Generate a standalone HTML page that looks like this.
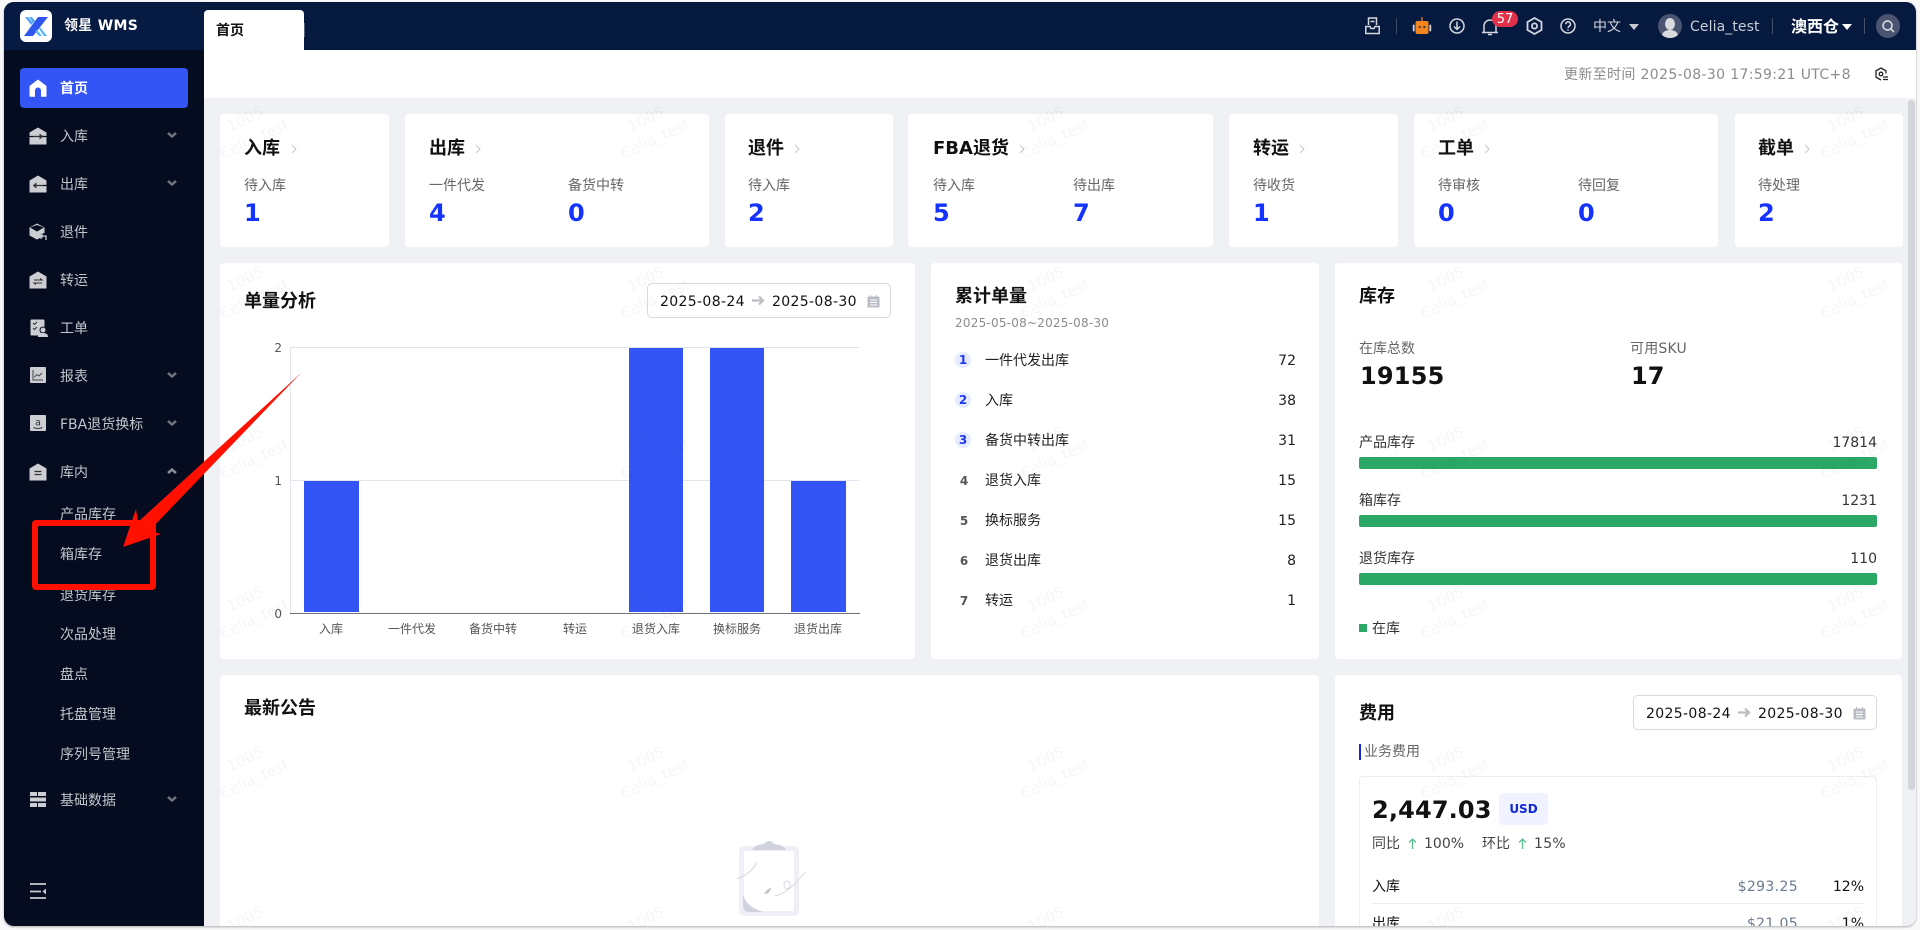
<!DOCTYPE html>
<html lang="zh"><head><meta charset="utf-8"><title>领星 WMS</title>
<style>
*{box-sizing:border-box}
html,body{margin:0;padding:0;width:1920px;height:930px;overflow:hidden;background:#f8f8f8;font-family:"DejaVu Sans","Noto Sans CJK SC",sans-serif;font-size:14px;color:#222}
#f{position:absolute;left:4px;top:2px;width:1912px;height:924px;overflow:hidden;border-radius:10px;background:#f0f1f5;box-shadow:0 1px 2px rgba(0,0,0,.3)}
#i{position:absolute;left:-4px;top:-2px;width:1920px;height:930px}
.a,.t,.c,.s{position:absolute}
.t{white-space:nowrap;line-height:20px;height:20px;margin-top:1px}
.r{text-align:right}
.c{background:#fff;border-radius:4px}
.s{display:block;overflow:visible}
.m{color:#c3c5cb;left:60px}
.h{font-size:18px;font-weight:700;color:#111;line-height:24px;height:24px}
.l{color:#666}
.n{font-size:24px;font-weight:700;color:#1533ff;line-height:30px;height:30px}
.b{font-weight:700;font-size:12px;color:#555;width:16px;text-align:center;left:955px}
.x{font-size:12px;color:#555;text-align:center;width:80px}
.d{letter-spacing:.35px}
.pick{position:absolute;border:1px solid #d9d9de;border-radius:5px;background:transparent}
</style></head><body>
<div id="f"><div id="i">

<!-- header -->
<div class="a" style="left:0;top:0;width:1920px;height:50px;background:#06193e"></div>
<div class="a" style="left:0;top:0;width:204px;height:50px;background:#071b42"></div>
<div class="a" style="left:20px;top:10px;width:32px;height:32px;background:#fff;border-radius:6px"></div>
<svg class="s" style="left:20px;top:10px" width="32" height="32" viewBox="0 0 32 32">
<path d="M18 7h10L13 26H4z" fill="#2f55ee"/>
<path d="M5 7h3l5 6-2 2zM9 7h3l3 4-2 2z" fill="#56a8f5"/>
<path d="M20 17l7 9h-3l-5-7zM17 20l5 6h-3l-4-5z" fill="#56b4f5"/>
</svg>
<div class="t" style="left:64px;top:15px;color:#fff;font-weight:700;font-size:14px;letter-spacing:.3px">领星 WMS</div>
<div class="a" style="left:204px;top:10px;width:100px;height:40px;background:#fff;border-radius:4px 4px 0 0"></div>
<div class="a" style="left:304px;top:23px;width:1px;height:14px;background:#55607a"></div>
<div class="t" style="left:216px;top:20px;color:#111;font-weight:700">首页</div>

<svg class="s" style="left:1365px;top:17px" width="15" height="18" viewBox="0 0 15 18" fill="none" stroke="#d4d7de" stroke-width="1.5"><path d="M3.500 8V1h8v7M5.500 4.500h4M.8 9.500h4.200l1 2h3l1-2h4.200v7H.8z"/></svg>
<div class="a" style="left:1396px;top:18px;width:1px;height:16px;background:#3c4a66"></div>
<svg class="s" style="left:1412px;top:16px" width="20" height="20" viewBox="0 0 20 20"><rect x="3.500" y="5" width="13" height="13" rx="2" fill="#f5851f"/><rect x="9.400" y="1" width="1.200" height="4" fill="#f5851f"/><rect x="0.800" y="8.500" width="1.800" height="7" rx=".9" fill="#d8d8d8"/><rect x="17.400" y="8.500" width="1.800" height="7" rx=".9" fill="#d8d8d8"/><circle cx="7.700" cy="11" r="1.100" fill="#333"/><circle cx="12.300" cy="11" r="1.100" fill="#333"/></svg>
<svg class="s" style="left:1449px;top:18px" width="16" height="16" viewBox="0 0 16 16" fill="none" stroke="#d4d7de" stroke-width="1.500"><circle cx="8" cy="8" r="7"/><path d="M8 3.500v8M5 8.500l3 3 3-3"/></svg>
<svg class="s" style="left:1481px;top:18px" width="18" height="18" viewBox="0 0 18 18" fill="none" stroke="#d4d7de" stroke-width="1.500"><path d="M1 14.500h16M3 14.500V8a6 6 0 0 1 12 0v6.500M7 16.500h4"/></svg>
<div class="a" style="left:1492px;top:11px;width:26px;height:16px;background:#e2304a;border-radius:8px;color:#fff;font-size:13px;line-height:17px;text-align:center">57</div>
<svg class="s" style="left:1526px;top:17px" width="17" height="18" viewBox="0 0 17 18" fill="none" stroke="#d4d7de" stroke-width="1.800"><path d="M8.500 1l7 4v8l-7 4-7-4V5z"/><circle cx="8.500" cy="9" r="2.600"/></svg>
<svg class="s" style="left:1560px;top:18px" width="16" height="16" viewBox="0 0 16 16" fill="none" stroke="#d4d7de" stroke-width="1.500"><circle cx="8" cy="8" r="7"/><path d="M5.800 6.200a2.300 2.300 0 1 1 3.400 2c-.8.500-1.200.9-1.200 1.800M8 11.300v1.300"/></svg>
<div class="t" style="left:1593px;top:16px;color:#d4d7de;font-size:14px">中文</div>
<div class="a" style="left:1629px;top:24px;border:5px solid transparent;border-top:6px solid #c6cad2;border-bottom:0"></div>
<svg class="s" style="left:1658px;top:14px" width="24" height="24" viewBox="0 0 24 24"><circle cx="12" cy="12" r="12" fill="#4a5470"/><ellipse cx="12" cy="10" rx="5" ry="6" fill="#d8dade"/><path d="M4 21c1-4 5-5 8-5s7 1 8 5a12 12 0 0 1-16 0z" fill="#d8dade"/></svg>
<div class="t" style="left:1690px;top:16px;color:#c9ced7;font-size:14px;letter-spacing:.1px">Celia_test</div>
<div class="a" style="left:1772px;top:18px;width:1px;height:16px;background:#47536c"></div>
<div class="t" style="left:1791px;top:16px;color:#fff;font-size:16px;font-weight:700">澳西仓</div>
<div class="a" style="left:1842px;top:24px;border:5px solid transparent;border-top:6px solid #fff;border-bottom:0"></div>
<div class="a" style="left:1864px;top:18px;width:1px;height:16px;background:#47536c"></div>
<svg class="s" style="left:1876px;top:14px" width="24" height="24" viewBox="0 0 24 24"><circle cx="12" cy="12" r="12" fill="#4a5470"/><circle cx="11.500" cy="11.500" r="4.500" fill="none" stroke="#cfd3db" stroke-width="1.700"/><path d="M15 15l3 3" stroke="#cfd3db" stroke-width="1.700"/></svg>

<!-- sidebar -->
<div class="a" style="left:0;top:50px;width:204px;height:880px;background:#050c1f"></div>
<div class="a" style="left:20px;top:68px;width:168px;height:40px;background:#3355f5;border-radius:4px"></div>
<svg class="s" style="left:29px;top:79px" width="18" height="18" viewBox="0 0 18 18"><path d="M9 0.500l8.500 6.500v10a.8.800 0 0 1-.8.800H12V11.500a3 3 0 0 0-6 0v6.300H1.300a.8.800 0 0 1-.8-.8V7z" fill="#fff"/></svg>
<div class="t" style="left:60px;top:78px;color:#fff;font-weight:700">首页</div>

<svg class="s" style="left:29px;top:127px" width="18" height="18" viewBox="0 0 18 18"><path d="M9 0.500l8.500 5V17.500H.5V5.500z" fill="#ccced4"/><path d="M0 9.500h18" stroke="#050c1f" stroke-width="1.200"/><path d="M4 9.500h9M11 7.500l2.500 2-2.500 2z" stroke="#333" fill="#333"/></svg>
<div class="t m" style="top:126px">入库</div>
<svg class="s" style="left:29px;top:175px" width="18" height="18" viewBox="0 0 18 18"><path d="M9 0.500l8.500 5V17.500H.5V5.500z" fill="#ccced4"/><path d="M6 10.500h12" stroke="#050c1f" stroke-width="1.200"/><path d="M5 10.500h9M7 8.500l-2.500 2 2.500 2z" stroke="#333" fill="#333"/></svg>
<div class="t m" style="top:174px">出库</div>
<svg class="s" style="left:29px;top:223px" width="19" height="18" viewBox="0 0 19 18"><path d="M8 0.500l7.500 4v5.500l-3 1-1.500 4-3 1.500-7.500-4V4.500z" fill="#ccced4"/><path d="M1 4.500l7 4 7-4-7-2.500z" fill="#050c1f"/><path d="M12 16v-3h5v4M12 13l1.500-1.500M12 13l1.500 1.500" stroke="#ccced4" stroke-width="1.300" fill="none"/></svg>
<div class="t m" style="top:222px">退件</div>
<svg class="s" style="left:29px;top:271px" width="18" height="18" viewBox="0 0 18 18"><path d="M9 0.500l8.500 5V17.500H.5V5.500z" fill="#ccced4"/><path d="M5 9h8l-2-1.500M13 12H5l2 1.500" stroke="#333" stroke-width="1.100" fill="none"/></svg>
<div class="t m" style="top:270px">转运</div>
<svg class="s" style="left:30px;top:319px" width="18" height="18" viewBox="0 0 18 18"><rect x="0.500" y="0.500" width="14" height="16" rx="1" fill="#ccced4"/><path d="M3 4l1.500 1.500L7 3M3 9l1.500 1.500L7 8" stroke="#333" fill="none"/><circle cx="13" cy="11" r="3" fill="#ccced4" stroke="#050c1f"/><path d="M8 18c0-3 2-4 5-4s5 1 5 4z" fill="#ccced4"/></svg>
<div class="t m" style="top:318px">工单</div>
<svg class="s" style="left:30px;top:367px" width="16" height="16" viewBox="0 0 16 16"><rect width="16" height="16" rx="1" fill="#ccced4"/><path d="M3 3v10h10M4.500 10l2.500-2.500 2 1.500 3-3" stroke="#444" fill="none"/></svg>
<div class="t m" style="top:366px">报表</div>
<svg class="s" style="left:30px;top:415px" width="16" height="16" viewBox="0 0 16 16"><rect width="16" height="16" rx="1" fill="#ccced4"/><text x="8" y="10.500" font-size="9.500" text-anchor="middle" fill="#333" font-family="DejaVu Sans">a</text><path d="M3.500 12.500q4.500 2 9 0" stroke="#333" fill="none"/></svg>
<div class="t m" style="top:414px">FBA退货换标</div>
<svg class="s" style="left:29px;top:463px" width="18" height="18" viewBox="0 0 18 18"><path d="M9 0.500l8.500 5V17.500H.5V5.500z" fill="#ccced4"/><path d="M5.500 8.500h7M5.500 11.500h7" stroke="#333" stroke-width="1.200"/></svg>
<div class="t m" style="top:462px">库内</div>

<div class="t m" style="top:504px">产品库存</div>
<div class="t m" style="top:544px">箱库存</div>
<div class="t m" style="top:585px">退货库存</div>
<div class="t m" style="top:624px">次品处理</div>
<div class="t m" style="top:664px">盘点</div>
<div class="t m" style="top:704px">托盘管理</div>
<div class="t m" style="top:744px">序列号管理</div>
<svg class="s" style="left:30px;top:792px" width="16" height="15" viewBox="0 0 16 15" fill="#ccced4"><rect width="7" height="4"/><rect x="8" width="8" height="4"/><rect y="5.500" width="16" height="4"/><rect y="11" width="7" height="4"/><rect x="8" y="11" width="8" height="4"/></svg>
<div class="t m" style="top:790px">基础数据</div>

<svg class="s" style="left:167px;top:132px" width="10" height="6" viewBox="0 0 10 6" fill="none" stroke="#6e7179" stroke-width="2.500"><path d="M1 1l4 3.500L9 1"/></svg>
<svg class="s" style="left:167px;top:180px" width="10" height="6" viewBox="0 0 10 6" fill="none" stroke="#6e7179" stroke-width="2.500"><path d="M1 1l4 3.500L9 1"/></svg>
<svg class="s" style="left:167px;top:372px" width="10" height="6" viewBox="0 0 10 6" fill="none" stroke="#6e7179" stroke-width="2.500"><path d="M1 1l4 3.500L9 1"/></svg>
<svg class="s" style="left:167px;top:420px" width="10" height="6" viewBox="0 0 10 6" fill="none" stroke="#6e7179" stroke-width="2.500"><path d="M1 1l4 3.500L9 1"/></svg>
<svg class="s" style="left:167px;top:468px" width="10" height="6" viewBox="0 0 10 6" fill="none" stroke="#8a8d94" stroke-width="2.500"><path d="M1 5l4-3.500L9 5"/></svg>
<svg class="s" style="left:167px;top:796px" width="10" height="6" viewBox="0 0 10 6" fill="none" stroke="#6e7179" stroke-width="2.500"><path d="M1 1l4 3.500L9 1"/></svg>
<svg class="s" style="left:30px;top:883px" width="16" height="16" viewBox="0 0 16 16" fill="none" stroke="#c8cad0" stroke-width="1.800"><path d="M0 1h16M0 8.500h11M0 15h16"/><path d="M16 5.500v6l-3.500-3z" fill="#c8cad0" stroke="none"/></svg>

<!-- content -->
<div class="a" style="left:204px;top:50px;width:1716px;height:48px;background:#fff"></div>
<div class="t d" style="left:1564px;top:64px;color:#8c8c8c;font-size:14px">更新至时间 2025-08-30 17:59:21 UTC+8</div>
<svg class="s" style="left:1875px;top:67px" width="13" height="14" viewBox="0 0 13 14" fill="none" stroke="#222" stroke-width="1.300"><path d="M6 1l5 2.800v2.700M6 13L1 10.200V3.800L6 1"/><circle cx="6" cy="7" r="1.800"/><path d="M8 10h5M8 12.500h5"/></svg>

<div class="a" style="left:1908px;top:98px;width:8px;height:832px;background:#f0f1f5"></div>
<div class="a" style="left:1908px;top:100px;width:7px;height:690px;background:#d4d5da;border-radius:3px"></div>

<!-- row 1 -->
<div class="c" style="left:220px;top:114px;width:169px;height:133px"></div>
<div class="c" style="left:405px;top:114px;width:304px;height:133px"></div>
<div class="c" style="left:725px;top:114px;width:168px;height:133px"></div>
<div class="c" style="left:908px;top:114px;width:305px;height:133px"></div>
<div class="c" style="left:1229px;top:114px;width:169px;height:133px"></div>
<div class="c" style="left:1414px;top:114px;width:304px;height:133px"></div>
<div class="c" style="left:1735px;top:114px;width:168px;height:133px"></div>

<div class="t h" style="left:244px;top:136px">入库</div>
<div class="t h" style="left:429px;top:136px">出库</div>
<div class="t h" style="left:748px;top:136px">退件</div>
<div class="t h" style="left:933px;top:136px">FBA退货</div>
<div class="t h" style="left:1253px;top:136px">转运</div>
<div class="t h" style="left:1438px;top:136px">工单</div>
<div class="t h" style="left:1758px;top:136px">截单</div>
<svg class="s" style="left:291px;top:144px" width="6" height="10" viewBox="0 0 6 10" fill="none" stroke="#c4c7ce"><path d="M1 1l4 4-4 4"/></svg>
<svg class="s" style="left:475px;top:144px" width="6" height="10" viewBox="0 0 6 10" fill="none" stroke="#c4c7ce"><path d="M1 1l4 4-4 4"/></svg>
<svg class="s" style="left:794px;top:144px" width="6" height="10" viewBox="0 0 6 10" fill="none" stroke="#c4c7ce"><path d="M1 1l4 4-4 4"/></svg>
<svg class="s" style="left:1019px;top:144px" width="6" height="10" viewBox="0 0 6 10" fill="none" stroke="#c4c7ce"><path d="M1 1l4 4-4 4"/></svg>
<svg class="s" style="left:1299px;top:144px" width="6" height="10" viewBox="0 0 6 10" fill="none" stroke="#c4c7ce"><path d="M1 1l4 4-4 4"/></svg>
<svg class="s" style="left:1484px;top:144px" width="6" height="10" viewBox="0 0 6 10" fill="none" stroke="#c4c7ce"><path d="M1 1l4 4-4 4"/></svg>
<svg class="s" style="left:1804px;top:144px" width="6" height="10" viewBox="0 0 6 10" fill="none" stroke="#c4c7ce"><path d="M1 1l4 4-4 4"/></svg>

<div class="t l" style="left:244px;top:175px;font-size:14px">待入库</div>
<div class="t l" style="left:429px;top:175px">一件代发</div>
<div class="t l" style="left:568px;top:175px">备货中转</div>
<div class="t l" style="left:748px;top:175px">待入库</div>
<div class="t l" style="left:933px;top:175px">待入库</div>
<div class="t l" style="left:1073px;top:175px">待出库</div>
<div class="t l" style="left:1253px;top:175px">待收货</div>
<div class="t l" style="left:1438px;top:175px">待审核</div>
<div class="t l" style="left:1578px;top:175px">待回复</div>
<div class="t l" style="left:1758px;top:175px">待处理</div>

<div class="t n" style="left:244px;top:197px">1</div>
<div class="t n" style="left:429px;top:197px">4</div>
<div class="t n" style="left:568px;top:197px">0</div>
<div class="t n" style="left:748px;top:197px">2</div>
<div class="t n" style="left:933px;top:197px">5</div>
<div class="t n" style="left:1073px;top:197px">7</div>
<div class="t n" style="left:1253px;top:197px">1</div>
<div class="t n" style="left:1438px;top:197px">0</div>
<div class="t n" style="left:1578px;top:197px">0</div>
<div class="t n" style="left:1758px;top:197px">2</div>

<!-- row 2 cards -->
<div class="c" style="left:220px;top:263px;width:695px;height:396px"></div>
<div class="c" style="left:931px;top:263px;width:388px;height:396px"></div>
<div class="c" style="left:1335px;top:263px;width:567px;height:396px"></div>

<!-- chart -->
<div class="t h" style="left:244px;top:289px">单量分析</div>
<div class="pick" style="left:647px;top:283px;width:244px;height:35px"></div>
<div class="t d" style="left:660px;top:291px;color:#111">2025-08-24</div>
<svg class="s" style="left:751px;top:295px" width="14" height="11" viewBox="0 0 14 11" fill="none" stroke="#bcbec4" stroke-width="2.200"><path d="M1 5.500h11M8 1.500l4 4-4 4"/></svg>
<div class="t d" style="left:772px;top:291px;color:#111">2025-08-30</div>
<svg class="s" style="left:867px;top:295px" width="13" height="13" viewBox="0 0 13 13"><rect x=".5" y="1.500" width="12" height="11" rx="1" fill="#b9bcc3"/><path d="M3 5h7M3 7.500h7M3 10h7" stroke="#fff"/><path d="M3.500 0v3M9.500 0v3" stroke="#b9bcc3"/></svg>

<div class="a" style="left:290px;top:347px;width:569px;height:1px;background:#e2e5ef"></div>
<div class="a" style="left:290px;top:480px;width:569px;height:1px;background:#e2e5ef"></div>
<div class="a" style="left:290px;top:347px;width:1px;height:266px;background:#e2e5ef"></div>
<div class="a" style="left:290px;top:613px;width:570px;height:1px;background:#6e6e74"></div>
<div class="a" style="left:304px;top:481px;width:55px;height:131px;background:#3355f5"></div>
<div class="a" style="left:629px;top:348px;width:54px;height:264px;background:#3355f5"></div>
<div class="a" style="left:710px;top:348px;width:54px;height:264px;background:#3355f5"></div>
<div class="a" style="left:791px;top:481px;width:55px;height:131px;background:#3355f5"></div>
<div class="t r" style="left:262px;top:337px;width:20px;font-size:12px;color:#555">2</div>
<div class="t r" style="left:262px;top:470px;width:20px;font-size:12px;color:#555">1</div>
<div class="t r" style="left:262px;top:603px;width:20px;font-size:12px;color:#555">0</div>
<div class="t x" style="left:291px;top:618px">入库</div>
<div class="t x" style="left:372px;top:618px">一件代发</div>
<div class="t x" style="left:453px;top:618px">备货中转</div>
<div class="t x" style="left:535px;top:618px">转运</div>
<div class="t x" style="left:616px;top:618px">退货入库</div>
<div class="t x" style="left:697px;top:618px">换标服务</div>
<div class="t x" style="left:778px;top:618px">退货出库</div>

<!-- ranks -->
<div class="t h" style="left:955px;top:284px">累计单量</div>
<div class="t" style="left:955px;top:312px;font-size:12px;color:#8c8c8c;letter-spacing:.22px">2025-05-08~2025-08-30</div>
<div class="a" style="left:955px;top:352px;width:16px;height:16px;border-radius:8px;background:#e6ebff"></div>
<div class="a" style="left:955px;top:392px;width:16px;height:16px;border-radius:8px;background:#e6ebff"></div>
<div class="a" style="left:955px;top:432px;width:16px;height:16px;border-radius:8px;background:#e6ebff"></div>
<div class="t b" style="top:349px;color:#2038ee">1</div>
<div class="t b" style="top:389px;color:#2038ee">2</div>
<div class="t b" style="top:429px;color:#2038ee">3</div>
<div class="t b" style="top:470px;left:956px">4</div>
<div class="t b" style="top:510px;left:956px">5</div>
<div class="t b" style="top:550px;left:956px">6</div>
<div class="t b" style="top:590px;left:956px">7</div>
<div class="t" style="left:985px;top:350px">一件代发出库</div>
<div class="t" style="left:985px;top:390px">入库</div>
<div class="t" style="left:985px;top:430px">备货中转出库</div>
<div class="t" style="left:985px;top:470px">退货入库</div>
<div class="t" style="left:985px;top:510px">换标服务</div>
<div class="t" style="left:985px;top:550px">退货出库</div>
<div class="t" style="left:985px;top:590px">转运</div>
<div class="t r" style="left:1236px;top:350px;width:60px">72</div>
<div class="t r" style="left:1236px;top:390px;width:60px">38</div>
<div class="t r" style="left:1236px;top:430px;width:60px">31</div>
<div class="t r" style="left:1236px;top:470px;width:60px">15</div>
<div class="t r" style="left:1236px;top:510px;width:60px">15</div>
<div class="t r" style="left:1236px;top:550px;width:60px">8</div>
<div class="t r" style="left:1236px;top:590px;width:60px">1</div>

<!-- stock -->
<div class="t h" style="left:1359px;top:284px">库存</div>
<div class="t l" style="left:1359px;top:338px">在库总数</div>
<div class="t l" style="left:1630px;top:338px;letter-spacing:.2px">可用SKU</div>
<div class="t n" style="left:1360px;top:360px;color:#111;letter-spacing:.2px">19155</div>
<div class="t n" style="left:1631px;top:360px;color:#111">17</div>
<div class="t" style="left:1359px;top:432px;color:#333">产品库存</div>
<div class="t r" style="left:1777px;top:432px;width:100px;color:#333">17814</div>
<div class="a" style="left:1359px;top:457px;width:518px;height:12px;background:#2aa866;border-radius:2px"></div>
<div class="t" style="left:1359px;top:490px;color:#333">箱库存</div>
<div class="t r" style="left:1777px;top:490px;width:100px;color:#333">1231</div>
<div class="a" style="left:1359px;top:515px;width:518px;height:12px;background:#2aa866;border-radius:2px"></div>
<div class="t" style="left:1359px;top:548px;color:#333">退货库存</div>
<div class="t r" style="left:1777px;top:548px;width:100px;color:#333">110</div>
<div class="a" style="left:1359px;top:573px;width:518px;height:12px;background:#2aa866;border-radius:2px"></div>
<div class="a" style="left:1359px;top:624px;width:8px;height:8px;background:#2aa866"></div>
<div class="t" style="left:1372px;top:618px;color:#333">在库</div>

<!-- row 3 -->
<div class="c" style="left:220px;top:675px;width:1099px;height:270px"></div>
<div class="c" style="left:1335px;top:675px;width:567px;height:270px"></div>
<div class="t h" style="left:244px;top:696px">最新公告</div>
<svg class="s" style="left:730px;top:838px" width="80" height="84" viewBox="0 0 80 84" fill="none">
<rect x="11.500" y="10.500" width="55" height="65" rx="2" fill="#fff" stroke="#eef0f5" stroke-width="5"/>
<path d="M22 12q2-5 12-6 2-3 5-3t5 3q10 1 12 6z" fill="#d0d3de"/>
<path d="M13 56q2 12 20 18H18q-5-1-5-6z" fill="#d0d3de"/>
<path d="M7 41q14-5 20-17M45 58q14-3 30-24" stroke="#d6d8e0"/>
<ellipse cx="57" cy="47" rx="3" ry="4" stroke="#d6d8e0"/>
<path d="M34 56q4-6 7-6-1 6-7 6z" fill="#c0c3cf"/>
</svg>

<div class="t h" style="left:1359px;top:701px">费用</div>
<div class="pick" style="left:1633px;top:695px;width:244px;height:35px"></div>
<div class="t d" style="left:1646px;top:703px;color:#111">2025-08-24</div>
<svg class="s" style="left:1737px;top:707px" width="14" height="11" viewBox="0 0 14 11" fill="none" stroke="#bcbec4" stroke-width="2.200"><path d="M1 5.500h11M8 1.500l4 4-4 4"/></svg>
<div class="t d" style="left:1758px;top:703px;color:#111">2025-08-30</div>
<svg class="s" style="left:1853px;top:707px" width="13" height="13" viewBox="0 0 13 13"><rect x=".5" y="1.500" width="12" height="11" rx="1" fill="#b9bcc3"/><path d="M3 5h7M3 7.500h7M3 10h7" stroke="#fff"/><path d="M3.500 0v3M9.500 0v3" stroke="#b9bcc3"/></svg>
<div class="a" style="left:1359px;top:744px;width:2px;height:16px;background:#1028d8"></div>
<div class="t l" style="left:1364px;top:741px">业务费用</div>
<div class="a" style="left:1359px;top:776px;width:518px;height:200px;border:1px solid #eceef2;border-radius:4px"></div>
<div class="t" style="left:1372px;top:794px;font-size:24px;font-weight:700;color:#111;line-height:30px;height:30px;letter-spacing:.15px">2,447.03</div>
<div class="a" style="left:1499px;top:793px;width:49px;height:32px;background:#f0f3ff;border-radius:4px;color:#1028d8;font-size:12px;font-weight:700;line-height:32px;text-align:center">USD</div>
<div class="t" style="left:1372px;top:833px;color:#444">同比</div>
<svg class="s" style="left:1408px;top:838px" width="9" height="11" viewBox="0 0 9 11" fill="none" stroke="#5bbf92" stroke-width="1.300"><path d="M4.500 11V1M1 4.500L4.500 1 8 4.500"/></svg>
<div class="t" style="left:1424px;top:833px;color:#444">100%</div>
<div class="t" style="left:1482px;top:833px;color:#444">环比</div>
<svg class="s" style="left:1518px;top:838px" width="9" height="11" viewBox="0 0 9 11" fill="none" stroke="#5bbf92" stroke-width="1.300"><path d="M4.500 11V1M1 4.500L4.500 1 8 4.500"/></svg>
<div class="t" style="left:1534px;top:833px;color:#444;letter-spacing:.3px">15%</div>
<div class="t" style="left:1372px;top:876px;color:#111">入库</div>
<div class="t r d" style="left:1698px;top:876px;width:100px;color:#6b7a90">$293.25</div>
<div class="t r" style="left:1804px;top:876px;width:60px;color:#111">12%</div>
<div class="a" style="left:1372px;top:903px;width:492px;height:1px;background:#eceef2"></div>
<div class="t" style="left:1372px;top:913px;color:#111">出库</div>
<div class="t r d" style="left:1698px;top:913px;width:100px;color:#6b7a90">$21.05</div>
<div class="t r" style="left:1804px;top:913px;width:60px;color:#111">1%</div>

<!-- watermark -->
<svg class="s" style="left:204px;top:98px" width="1704" height="832" viewBox="204 98 1704 832" font-family="DejaVu Sans" font-size="15" fill="#000" fill-opacity="0.04" text-anchor="middle">
<g transform="rotate(-25 245 119)"><text x="245" y="124">1005</text><text x="245" y="146">Celia_test</text></g>
<g transform="rotate(-25 646 119)"><text x="646" y="124">1005</text><text x="646" y="146">Celia_test</text></g>
<g transform="rotate(-25 1046 119)"><text x="1046" y="124">1005</text><text x="1046" y="146">Celia_test</text></g>
<g transform="rotate(-25 1446 119)"><text x="1446" y="124">1005</text><text x="1446" y="146">Celia_test</text></g>
<g transform="rotate(-25 1846 119)"><text x="1846" y="124">1005</text><text x="1846" y="146">Celia_test</text></g>
<g transform="rotate(-25 245 279)"><text x="245" y="284">1005</text><text x="245" y="306">Celia_test</text></g>
<g transform="rotate(-25 646 279)"><text x="646" y="284">1005</text><text x="646" y="306">Celia_test</text></g>
<g transform="rotate(-25 1046 279)"><text x="1046" y="284">1005</text><text x="1046" y="306">Celia_test</text></g>
<g transform="rotate(-25 1446 279)"><text x="1446" y="284">1005</text><text x="1446" y="306">Celia_test</text></g>
<g transform="rotate(-25 1846 279)"><text x="1846" y="284">1005</text><text x="1846" y="306">Celia_test</text></g>
<g transform="rotate(-25 245 439)"><text x="245" y="444">1005</text><text x="245" y="466">Celia_test</text></g>
<g transform="rotate(-25 646 439)"><text x="646" y="444">1005</text><text x="646" y="466">Celia_test</text></g>
<g transform="rotate(-25 1046 439)"><text x="1046" y="444">1005</text><text x="1046" y="466">Celia_test</text></g>
<g transform="rotate(-25 1446 439)"><text x="1446" y="444">1005</text><text x="1446" y="466">Celia_test</text></g>
<g transform="rotate(-25 1846 439)"><text x="1846" y="444">1005</text><text x="1846" y="466">Celia_test</text></g>
<g transform="rotate(-25 245 599)"><text x="245" y="604">1005</text><text x="245" y="626">Celia_test</text></g>
<g transform="rotate(-25 646 599)"><text x="646" y="604">1005</text><text x="646" y="626">Celia_test</text></g>
<g transform="rotate(-25 1046 599)"><text x="1046" y="604">1005</text><text x="1046" y="626">Celia_test</text></g>
<g transform="rotate(-25 1446 599)"><text x="1446" y="604">1005</text><text x="1446" y="626">Celia_test</text></g>
<g transform="rotate(-25 1846 599)"><text x="1846" y="604">1005</text><text x="1846" y="626">Celia_test</text></g>
<g transform="rotate(-25 245 759)"><text x="245" y="764">1005</text><text x="245" y="786">Celia_test</text></g>
<g transform="rotate(-25 646 759)"><text x="646" y="764">1005</text><text x="646" y="786">Celia_test</text></g>
<g transform="rotate(-25 1046 759)"><text x="1046" y="764">1005</text><text x="1046" y="786">Celia_test</text></g>
<g transform="rotate(-25 1446 759)"><text x="1446" y="764">1005</text><text x="1446" y="786">Celia_test</text></g>
<g transform="rotate(-25 1846 759)"><text x="1846" y="764">1005</text><text x="1846" y="786">Celia_test</text></g>
<g transform="rotate(-25 245 919)"><text x="245" y="924">1005</text></g>
<g transform="rotate(-25 646 919)"><text x="646" y="924">1005</text></g>
<g transform="rotate(-25 1046 919)"><text x="1046" y="924">1005</text></g>
<g transform="rotate(-25 1446 919)"><text x="1446" y="924">1005</text></g>
<g transform="rotate(-25 1846 919)"><text x="1846" y="924">1005</text></g>
</svg>

<!-- annotation -->
<svg class="s" style="left:0;top:0" width="1920" height="930" viewBox="0 0 1920 930">
<rect x="35" y="523" width="118" height="64" rx="1" fill="none" stroke="#ff1000" stroke-width="6"/>
<path d="M301 373L138 522 136 509 123 547 161 534 149 531z" fill="#ff1000"/>
</svg>

</div></div>
</body></html>
